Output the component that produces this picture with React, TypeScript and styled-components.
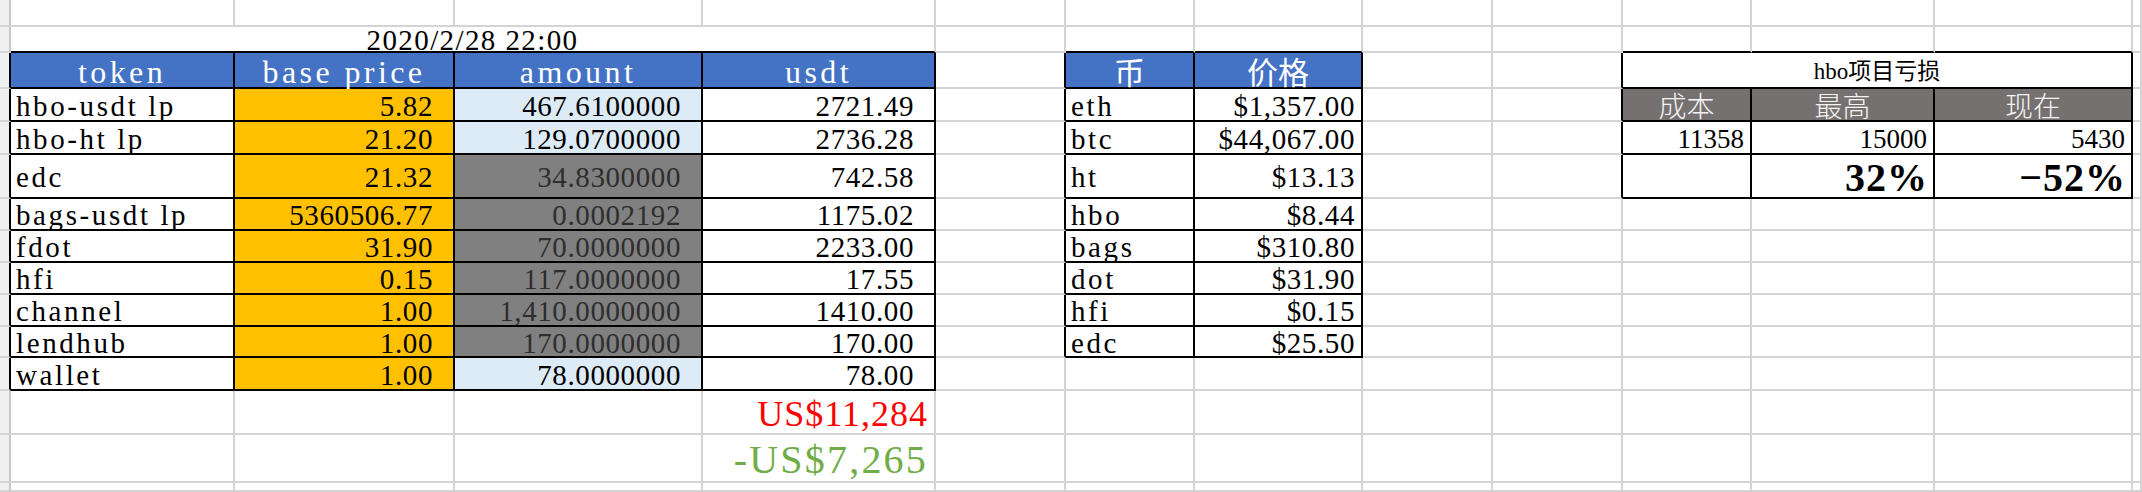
import React from "react";
import styled, { createGlobalStyle } from "styled-components";

// sheet geometry, measured off the screenshot
const COLS = [11, 224, 220, 248, 233, 130, 129, 168, 130, 130, 129, 183, 198, 9];
const ROWS = [27, 26, 36, 33, 33, 44, 32, 32, 32, 32, 31, 33, 44, 48, 9];

const GRID = "#d4d4d4";
const INK = "#000";

type Box = { r0: number; r1: number; c0: number; c1: number };
const BOXES: Box[] = [
  { r0: 2, r1: 11, c0: 1, c1: 4 },
  { r0: 2, r1: 10, c0: 6, c1: 7 },
  { r0: 2, r1: 5, c0: 10, c1: 12 },
];
const inBox = (r: number, c: number) =>
  BOXES.some((b) => r >= b.r0 && r <= b.r1 && c >= b.c0 && c <= b.c1);

type Kind =
  | "date" | "head" | "token" | "price" | "amount" | "usdt" | "coin" | "quote"
  | "title" | "grayHead" | "stat" | "pct" | "total" | "loss";

type Spec = { r: number; c: number; span?: number; kind: Kind; text: string; tone?: "light" | "gray" };

const tokens: [string, string, string, string, "light" | "gray"][] = [
  ["hbo-usdt lp", "5.82", "467.6100000", "2721.49", "light"],
  ["hbo-ht lp", "21.20", "129.0700000", "2736.28", "light"],
  ["edc", "21.32", "34.8300000", "742.58", "gray"],
  ["bags-usdt lp", "5360506.77", "0.0002192", "1175.02", "gray"],
  ["fdot", "31.90", "70.0000000", "2233.00", "gray"],
  ["hfi", "0.15", "117.0000000", "17.55", "gray"],
  ["channel", "1.00", "1,410.0000000", "1410.00", "gray"],
  ["lendhub", "1.00", "170.0000000", "170.00", "gray"],
  ["wallet", "1.00", "78.0000000", "78.00", "light"],
];

const quotes = [
  ["eth", "$1,357.00"],
  ["btc", "$44,067.00"],
  ["ht", "$13.13"],
  ["hbo", "$8.44"],
  ["bags", "$310.80"],
  ["dot", "$31.90"],
  ["hfi", "$0.15"],
  ["edc", "$25.50"],
];

const specs: Spec[] = [
  { r: 1, c: 1, span: 4, kind: "date", text: "2020/2/28 22:00" },
  { r: 2, c: 1, kind: "head", text: "token" },
  { r: 2, c: 2, kind: "head", text: "base price" },
  { r: 2, c: 3, kind: "head", text: "amount" },
  { r: 2, c: 4, kind: "head", text: "usdt" },
  { r: 2, c: 6, kind: "head", text: "币" },
  { r: 2, c: 7, kind: "head", text: "价格" },
  { r: 2, c: 10, span: 3, kind: "title", text: "hbo项目亏损" },
  { r: 3, c: 10, kind: "grayHead", text: "成本" },
  { r: 3, c: 11, kind: "grayHead", text: "最高" },
  { r: 3, c: 12, kind: "grayHead", text: "现在" },
  { r: 4, c: 10, kind: "stat", text: "11358" },
  { r: 4, c: 11, kind: "stat", text: "15000" },
  { r: 4, c: 12, kind: "stat", text: "5430" },
  { r: 5, c: 11, kind: "pct", text: "32%" },
  { r: 5, c: 12, kind: "pct", text: "\u221252%" },
  { r: 12, c: 4, kind: "total", text: "US$11,284" },
  { r: 13, c: 4, kind: "loss", text: "-US$7,265" },
];
tokens.forEach(([name, base, amount, usdt, tone], i) => {
  const r = 3 + i;
  specs.push({ r, c: 1, kind: "token", text: name });
  specs.push({ r, c: 2, kind: "price", text: base });
  specs.push({ r, c: 3, kind: "amount", text: amount, tone });
  specs.push({ r, c: 4, kind: "usdt", text: usdt });
});
quotes.forEach(([coin, price], i) => {
  specs.push({ r: 3 + i, c: 6, kind: "coin", text: coin });
  specs.push({ r: 3 + i, c: 7, kind: "quote", text: price });
});

const Global = createGlobalStyle`
  html, body { margin: 0; padding: 0; background: #fff; overflow: hidden; }
  body { font-family: "Liberation Serif", "Noto Sans CJK SC", serif; }
`;

const Sheet = styled.div`
  display: grid;
  grid-template-columns: ${COLS.map((w) => w + "px").join(" ")};
  grid-template-rows: ${ROWS.map((h) => h + "px").join(" ")};
  width: 2142px;
  height: 492px;
  overflow: hidden;
`;

type CellProps = { $r: number; $c: number; $span: number; $right: string; $bottom: string };

const Cell = styled.div<CellProps>`
  grid-row: ${(p) => p.$r + 1};
  grid-column: ${(p) => p.$c + 1} / span ${(p) => p.$span};
  box-sizing: border-box;
  border-right: 2px solid ${(p) => p.$right};
  border-bottom: 2px solid ${(p) => p.$bottom};
  background: #fff;
  display: flex;
  align-items: center;
  min-width: 0;
  padding-top: 3px;
  white-space: nowrap;
  line-height: 1;
  color: #000;
  font-size: 29px;
  letter-spacing: 0.6px;
`;

const RowHead = styled(Cell)`
  background: #eff0f2;
  border-right-color: ${(p) => (p.$right === INK ? INK : "#c8c8c8")};
`;

const DateCell = styled(Cell)`
  justify-content: center;
  letter-spacing: 1.4px;
`;

const HeadCell = styled(Cell)`
  background: #4472c4;
  color: #fff;
  justify-content: center;
  font-size: 32px;
  letter-spacing: 3.4px;
`;

const CjkHead = styled(HeadCell)`
  font-family: "Noto Sans CJK SC", sans-serif;
  font-size: 31px;
  letter-spacing: 0;
  padding-top: 0;
`;

const NameCell = styled(Cell)`
  padding-left: 5px;
  letter-spacing: 2.6px;
`;

const NumCell = styled(Cell)<{ $pad: number }>`
  justify-content: flex-end;
  padding-right: ${(p) => p.$pad}px;
`;

const PriceCell = styled(NumCell)`
  background: #ffc000;
`;

const AmountCell = styled(NumCell)<{ $tone: "light" | "gray" }>`
  background: ${(p) => (p.$tone === "gray" ? "#808080" : "#ddebf7")};
  color: ${(p) => (p.$tone === "gray" ? "#2e2e2e" : "#000")};
`;

const TitleCell = styled(Cell)`
  justify-content: center;
  font-size: 23px;
  letter-spacing: 0;
`;

const GrayHeadCell = styled(Cell)`
  background: #767171;
  color: #f4f4f4;
  justify-content: center;
  font-family: "Noto Sans CJK SC", sans-serif;
  font-size: 28px;
  letter-spacing: 0;
  font-weight: 300;
  padding-top: 0;
`;

const StatCell = styled(NumCell)`
  font-size: 27px;
  letter-spacing: 0;
`;

const PctCell = styled(NumCell)`
  font-size: 40px;
  font-weight: bold;
  letter-spacing: 1px;
`;

const MoneyCell = styled(NumCell)<{ $ink: string; $size: number; $ls: number }>`
  color: ${(p) => p.$ink};
  font-size: ${(p) => p.$size}px;
  letter-spacing: ${(p) => p.$ls}px;
`;

function renderSpec(s: Spec | undefined, base: CellProps, key: string) {
  if (!s) return base.$c === 0 ? <RowHead key={key} {...base} /> : <Cell key={key} {...base} />;
  switch (s.kind) {
    case "date":
      return <DateCell key={key} {...base}>{s.text}</DateCell>;
    case "head":
      return /[a-z]/.test(s.text)
        ? <HeadCell key={key} {...base}>{s.text}</HeadCell>
        : <CjkHead key={key} {...base}>{s.text}</CjkHead>;
    case "token":
    case "coin":
      return <NameCell key={key} {...base}>{s.text}</NameCell>;
    case "price":
      return <PriceCell key={key} {...base} $pad={20}>{s.text}</PriceCell>;
    case "amount":
      return <AmountCell key={key} {...base} $pad={20} $tone={s.tone || "light"}>{s.text}</AmountCell>;
    case "usdt":
      return <NumCell key={key} {...base} $pad={20}>{s.text}</NumCell>;
    case "quote":
      return <NumCell key={key} {...base} $pad={6}>{s.text}</NumCell>;
    case "title":
      return <TitleCell key={key} {...base}>{s.text}</TitleCell>;
    case "grayHead":
      return <GrayHeadCell key={key} {...base}>{s.text}</GrayHeadCell>;
    case "stat":
      return <StatCell key={key} {...base} $pad={6}>{s.text}</StatCell>;
    case "pct":
      return <PctCell key={key} {...base} $pad={5}>{s.text}</PctCell>;
    case "total":
      return <MoneyCell key={key} {...base} $pad={6} $ink="#ff0000" $size={36} $ls={1}>{s.text}</MoneyCell>;
    case "loss":
      return <MoneyCell key={key} {...base} $pad={6} $ink="#70ad47" $size={40} $ls={2.2}>{s.text}</MoneyCell>;
  }
}

export default function App() {
  const byPos = new Map<string, Spec>();
  const covered = new Set<string>();
  specs.forEach((s) => {
    byPos.set(`${s.r},${s.c}`, s);
    for (let k = 1; k < (s.span || 1); k++) covered.add(`${s.r},${s.c + k}`);
  });

  const cells: React.ReactNode[] = [];
  ROWS.forEach((_, r) => {
    COLS.forEach((__, c) => {
      const key = `${r},${c}`;
      if (covered.has(key)) return;
      const s = byPos.get(key);
      const span = s?.span || 1;
      const last = c + span - 1;
      let bottomInk = false;
      for (let k = c; k <= last; k++) if (inBox(r, k) || inBox(r + 1, k)) bottomInk = true;
      const base: CellProps = {
        $r: r,
        $c: c,
        $span: span,
        $right: inBox(r, last) || inBox(r, last + 1) ? INK : GRID,
        $bottom: bottomInk ? INK : GRID,
      };
      cells.push(renderSpec(s, base, key));
    });
  });

  return (
    <>
      <Global />
      <Sheet>{cells}</Sheet>
    </>
  );
}
